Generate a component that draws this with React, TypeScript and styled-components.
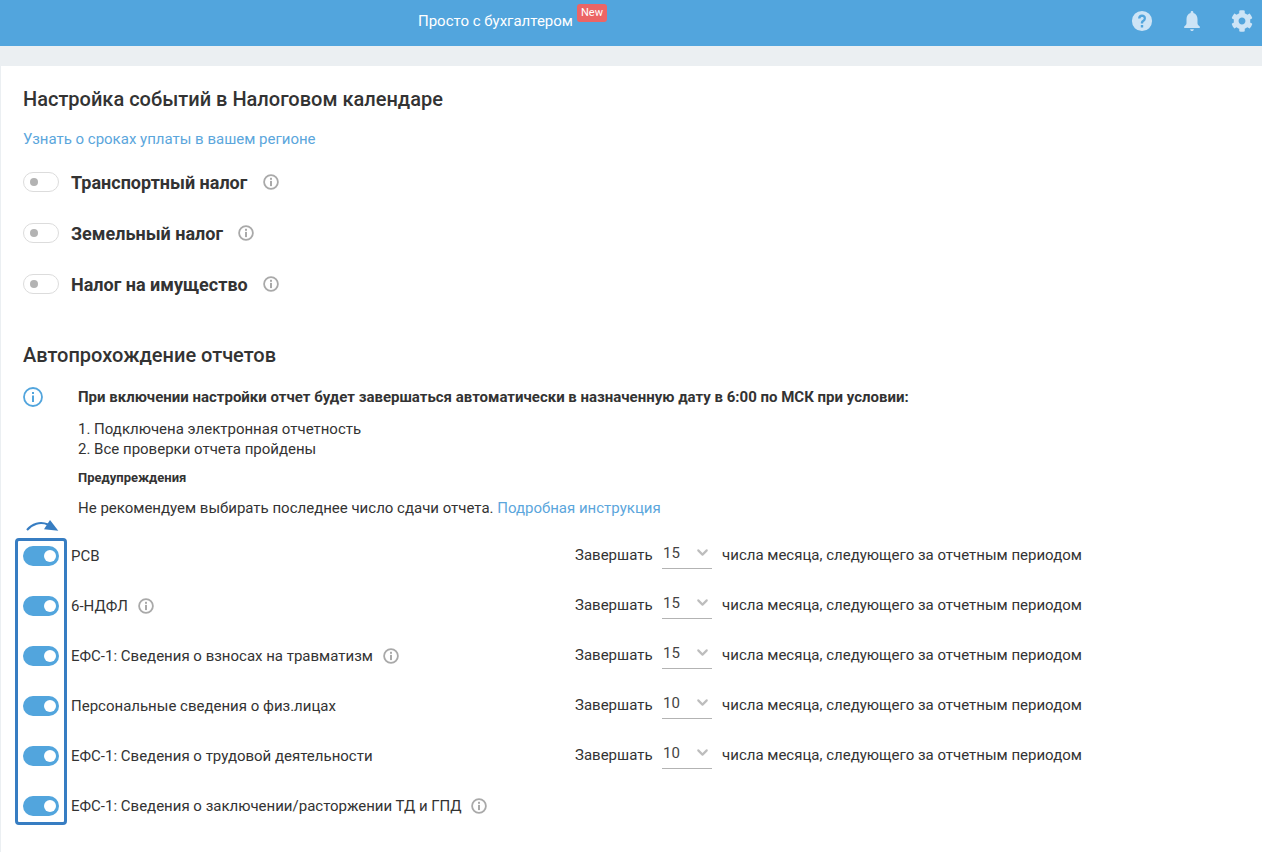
import React from 'react';
import styled, { createGlobalStyle } from 'styled-components';
import { ChevronDown } from 'lucide-react';
import { FaCog } from 'react-icons/fa';

const GlobalStyle = createGlobalStyle`
  html, body {
    margin: 0;
    padding: 0;
    background: #ebeff2;
    font-family: Roboto, "Noto Sans", sans-serif;
    color: #333;
  }
`;

const Page = styled.div`
  width: 1262px;
  height: 852px;
  overflow: hidden;
`;

const Header = styled.header`
  box-sizing: border-box;
  height: 46px;
  background: #52a5dd;
  display: flex;
  align-items: center;
  padding: 0 9px 4px 418px;
`;

const Brand = styled.div`
  position: relative;
  font-size: 15px;
  color: #fff;
`;

const NewBadge = styled.span`
  position: absolute;
  left: 159px;
  top: -8px;
  width: 30px;
  height: 18px;
  border-radius: 3px;
  background: #ec6565;
  color: #fff;
  font-size: 11px;
  line-height: 17px;
  text-align: center;
`;

const HeaderIcons = styled.div`
  margin-left: auto;
  display: flex;
  align-items: center;
  gap: 28px;
`;

const HeaderIcon = styled.svg`
  width: 22px;
  height: 22px;
  fill: #cde4f6;
  display: block;
`;

const GearIcon = styled(FaCog)`
  width: 22px;
  height: 22px;
  color: #cde4f6;
  display: block;
`;

const Content = styled.main`
  margin: 20px 0 0 1px;
  background: #fff;
  height: 786px;
  padding: 20px 22px 0;
  position: relative;
`;

const Title = styled.h2`
  margin: 0;
  font-size: 20px;
  line-height: 26px;
  font-weight: 500;
  color: #333;
`;

const Link = styled.a`
  color: #5ba6dc;
  text-decoration: none;
`;

const RegionLink = styled(Link)`
  display: block;
  font-size: 15px;
  line-height: 20px;
  margin-top: 17px;
`;

const TaxList = styled.div`
  margin-top: 23px;
  display: flex;
  flex-direction: column;
  gap: 31px;
`;

const Row = styled.div`
  display: flex;
  align-items: center;
  height: 20px;
`;

const Track = styled.span<{ $on?: boolean }>`
  flex: none;
  box-sizing: border-box;
  width: 36px;
  height: 20px;
  margin-right: 1px;
  border-radius: 10px;
  display: flex;
  align-items: center;
  padding: 0 3px 0 6px;
  justify-content: ${({ $on }) => ($on ? 'flex-end' : 'flex-start')};
  background: ${({ $on }) => ($on ? '#52a5dd' : '#fff')};
  border: ${({ $on }) => ($on ? 'none' : '1px solid #dcdcdc')};
`;

const Knob = styled.span<{ $on?: boolean }>`
  display: block;
  width: ${({ $on }) => ($on ? '12px' : '8px')};
  height: ${({ $on }) => ($on ? '12px' : '8px')};
  border-radius: 50%;
  background: ${({ $on }) => ($on ? '#fff' : '#b3b3b3')};
`;

const Toggle = ({ on }: { on?: boolean }) => (
  <Track $on={on}>
    <Knob $on={on} />
  </Track>
);

const TaxName = styled.span`
  margin-left: 11px;
  font-size: 18px;
  line-height: 19px;
  font-weight: 700;
  color: #333;
`;

const InfoSvg = styled.svg<{ $gap: number }>`
  flex: none;
  width: 16px;
  height: 16px;
  margin-left: ${({ $gap }) => $gap}px;
  color: #a9a9a9;
`;

const InfoIcon = ({ gap }: { gap: number }) => (
  <InfoSvg $gap={gap} viewBox="0 0 16 16" fill="none">
    <circle cx="8" cy="8" r="6.9" stroke="currentColor" strokeWidth="1.8" />
    <rect x="7" y="3.8" width="2" height="2" fill="currentColor" />
    <rect x="7" y="6.9" width="2" height="5.2" fill="currentColor" />
  </InfoSvg>
);

const SecondTitle = styled(Title)`
  margin-top: 48px;
`;

const Notice = styled.div`
  margin-top: 16px;
  display: flex;
`;

const NoticeIcon = styled.svg`
  flex: none;
  width: 20px;
  height: 20px;
  margin-top: 3px;
  color: #52a5dd;
`;

const NoticeBody = styled.div`
  margin-left: 35px;
  font-size: 15px;
  color: #333;
`;

const NoticeLead = styled.div`
  font-weight: 700;
  line-height: 20px;
  margin-top: 3px;
`;

const Steps = styled.div`
  line-height: 20px;
  margin-top: 12px;
`;

const WarnTitle = styled.div`
  font-size: 13px;
  font-weight: 700;
  line-height: 16px;
  margin-top: 11px;
`;

const WarnText = styled.div`
  line-height: 20px;
  margin-top: 12px;
`;

const ReportList = styled.div`
  margin-top: 28px;
  display: flex;
  flex-direction: column;
  gap: 30px;
`;

const ReportRow = styled(Row)`
  position: relative;
`;

const ReportName = styled.span`
  margin-left: 11px;
  font-size: 15px;
  color: #333;
`;

const Schedule = styled.div`
  position: absolute;
  left: 552px;
  margin-bottom: 2px;
  display: flex;
  align-items: center;
  font-size: 15px;
  color: #333;
`;

const DaySelect = styled.div`
  box-sizing: border-box;
  width: 50px;
  height: 28px;
  margin: 0 10px 0 9.5px;
  border-bottom: 1px solid #b3b3b3;
  display: flex;
  justify-content: space-between;
  padding: 2px 0 0 1px;
  line-height: 20px;
  color: #444;
`;

const Chevron = styled(ChevronDown)`
  margin: 1px 1px 0 0;
  color: #bdbdbd;
`;

const Highlight = styled.div`
  position: absolute;
  left: 14px;
  top: 472px;
  width: 52px;
  height: 287px;
  box-sizing: border-box;
  border: 3px solid #377dc2;
  border-radius: 4px;
  pointer-events: none;
`;

const Arrow = styled.svg`
  position: absolute;
  left: 24px;
  top: 453px;
  width: 37px;
  height: 16px;
`;

const reports = [
  { name: 'РСВ', day: '15' },
  { name: '6-НДФЛ', day: '15', info: 10 },
  { name: 'ЕФС-1: Сведения о взносах на травматизм', day: '15', info: 10 },
  { name: 'Персональные сведения о физ.лицах', day: '10' },
  { name: 'ЕФС-1: Сведения о трудовой деятельности', day: '10' },
  { name: 'ЕФС-1: Сведения о заключении/расторжении ТД и ГПД', info: 9 },
];

export default function App() {
  return (
    <Page>
      <GlobalStyle />
      <Header>
        <Brand>
          Просто с бухгалтером
          <NewBadge>New</NewBadge>
        </Brand>
        <HeaderIcons>
          <HeaderIcon viewBox="0 0 24 24">
            <path
              fillRule="evenodd"
              d="M12 1a11 11 0 1 0 0 22 11 11 0 0 0 0-22ZM10.7 19v-2.6h2.600V19h-2.600Zm4.900-7.600c-.5.6-1 1-1.500 1.400-.6.500-.8.900-.8 1.900h-2.600c0-1.700.5-2.600 1.500-3.400.5-.4 1-.8 1.300-1.200.3-.3.400-.7.400-1.100 0-.9-.6-1.500-1.700-1.500-1.200 0-1.800.7-1.900 1.900H7.700C7.800 6.500 9.400 5 12 5c2.500 0 4.300 1.400 4.300 3.700 0 1.100-.2 1.900-.7 2.700Z"
            />
          </HeaderIcon>
          <HeaderIcon viewBox="0 0 24 24">
            <path d="M12 1c-.9 0-1.500.6-1.500 1.500v.7C7.600 3.900 6 6.500 6 9.800v4.700c0 1.500-1.100 2.700-2.500 3.500v1.500h17V18c-1.400-.8-2.500-2-2.500-3.500V9.800c0-3.300-1.600-5.900-4.500-6.600v-.7C13.500 1.600 12.900 1 12 1ZM10 21c0 1 .9 2 2 2s2-1 2-2h-4Z" />
          </HeaderIcon>
          <GearIcon />
        </HeaderIcons>
      </Header>
      <Content>
        <Title>Настройка событий в Налоговом календаре</Title>
        <RegionLink>Узнать о сроках уплаты в вашем регионе</RegionLink>
        <TaxList>
          <Row>
            <Toggle />
            <TaxName>Транспортный налог</TaxName>
            <InfoIcon gap={16} />
          </Row>
          <Row>
            <Toggle />
            <TaxName>Земельный налог</TaxName>
            <InfoIcon gap={15} />
          </Row>
          <Row>
            <Toggle />
            <TaxName>Налог на имущество</TaxName>
            <InfoIcon gap={15} />
          </Row>
        </TaxList>
        <SecondTitle>Автопрохождение отчетов</SecondTitle>
        <Notice>
          <NoticeIcon viewBox="0 0 20 20" fill="none">
            <circle cx="10" cy="10" r="9" stroke="currentColor" strokeWidth="1.800" />
            <rect x="9" y="5" width="2" height="2" fill="currentColor" />
            <rect x="9" y="8.500" width="2" height="6.500" fill="currentColor" />
          </NoticeIcon>
          <NoticeBody>
            <NoticeLead>
              При включении настройки отчет будет завершаться автоматически в назначенную дату в 6:00 по МСК при условии:
            </NoticeLead>
            <Steps>
              1. Подключена электронная отчетность
              <br />
              2. Все проверки отчета пройдены
            </Steps>
            <WarnTitle>Предупреждения</WarnTitle>
            <WarnText>
              Не рекомендуем выбирать последнее число сдачи отчета. <Link>Подробная инструкция</Link>
            </WarnText>
          </NoticeBody>
        </Notice>
        <ReportList>
          {reports.map((r) => (
            <ReportRow key={r.name}>
              <Toggle on />
              <ReportName>{r.name}</ReportName>
              {r.info && <InfoIcon gap={r.info} />}
              {r.day && (
                <Schedule>
                  Завершать
                  <DaySelect>
                    {r.day}
                    <Chevron size={17} strokeWidth={3} />
                  </DaySelect>
                  числа месяца, следующего за отчетным периодом
                </Schedule>
              )}
            </ReportRow>
          ))}
        </ReportList>
        <Arrow viewBox="0 0 37 16" fill="none">
          <path d="M2 11C7 5 15 2 23 5.500" stroke="#377dc2" strokeWidth="2" />
          <path d="M25 1L33.300 11.700 19 10.300Z" fill="#377dc2" />
        </Arrow>
        <Highlight />
      </Content>
    </Page>
  );
}
